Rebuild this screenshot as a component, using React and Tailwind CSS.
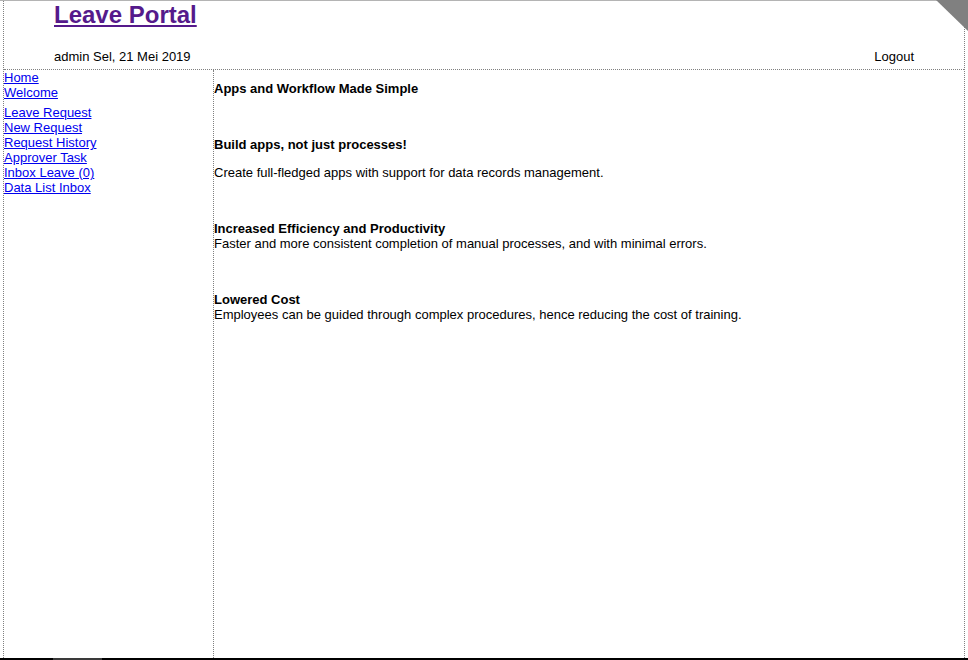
import React from "react";

const menuTop = ["Home", "Welcome"];
const menuLeave = [
  "Leave Request",
  "New Request",
  "Request History",
  "Approver Task",
  "Inbox Leave (0)",
  "Data List Inbox",
];

export default function App() {
  return (
    <div className="relative flex h-[660px] w-[968px] flex-col overflow-hidden bg-white font-['Liberation_Sans',Arial,sans-serif] text-[13px] leading-[15px] text-black">
      {/* top rule */}
      <div className="h-px w-full bg-[#b4b4b4]" />

      {/* page frame */}
      <div className="ml-[3px] flex w-[962px] flex-1 flex-col border-x border-dotted border-x-[#808080]">
        {/* Header */}
        <div className="flex h-[69px] flex-col border-b border-dotted border-b-[#808080] pl-[50px] pr-[50px]">
          <a
            href="#"
            className="self-start text-[24px] font-bold leading-[27px] text-[#551a8b] underline"
          >
            Leave Portal
          </a>
          <div className="mt-[21px] flex items-center justify-between">
            <span>admin Sel, 21 Mei 2019</span>
            <span>Logout</span>
          </div>
        </div>

        {/* Body */}
        <div className="flex flex-1">
          <div className="w-[210px] border-r border-dotted border-r-[#808080]">
            <ul className="flex flex-col">
              {menuTop.map((m) => (
                <li key={m}>
                  <a href="#" className="text-[#0000ee] underline">
                    {m}
                  </a>
                </li>
              ))}
            </ul>
            <ul className="mt-[5px] flex flex-col">
              {menuLeave.map((m) => (
                <li key={m}>
                  <a href="#" className="text-[#0000ee] underline">
                    {m}
                  </a>
                </li>
              ))}
            </ul>
          </div>

          <div className="flex-1 pt-[11px]">
            <p className="font-bold">Apps and Workflow Made Simple</p>
            <p className="mt-[41px] font-bold">Build apps, not just processes!</p>
            <p className="mt-[13px]">Create full-fledged apps with support for data records management.</p>
            <p className="mt-[41px] font-bold">Increased Efficiency and Productivity</p>
            <p>Faster and more consistent completion of manual processes, and with minimal errors.</p>
            <p className="mt-[41px] font-bold">Lowered Cost</p>
            <p>Employees can be guided through complex procedures, hence reducing the cost of training.</p>
          </div>
        </div>
      </div>

      {/* bottom bar */}
      <div className="flex h-[2px] w-full bg-black">
        <div className="ml-[53px] w-[49px] bg-[#3a3a3a]" />
      </div>

      {/* corner fold */}
      <svg className="absolute right-0 top-0" width="32" height="31" viewBox="0 0 32 31">
        <polygon points="0,0 32,0 32,31" fill="#808080" />
      </svg>
    </div>
  );
}
